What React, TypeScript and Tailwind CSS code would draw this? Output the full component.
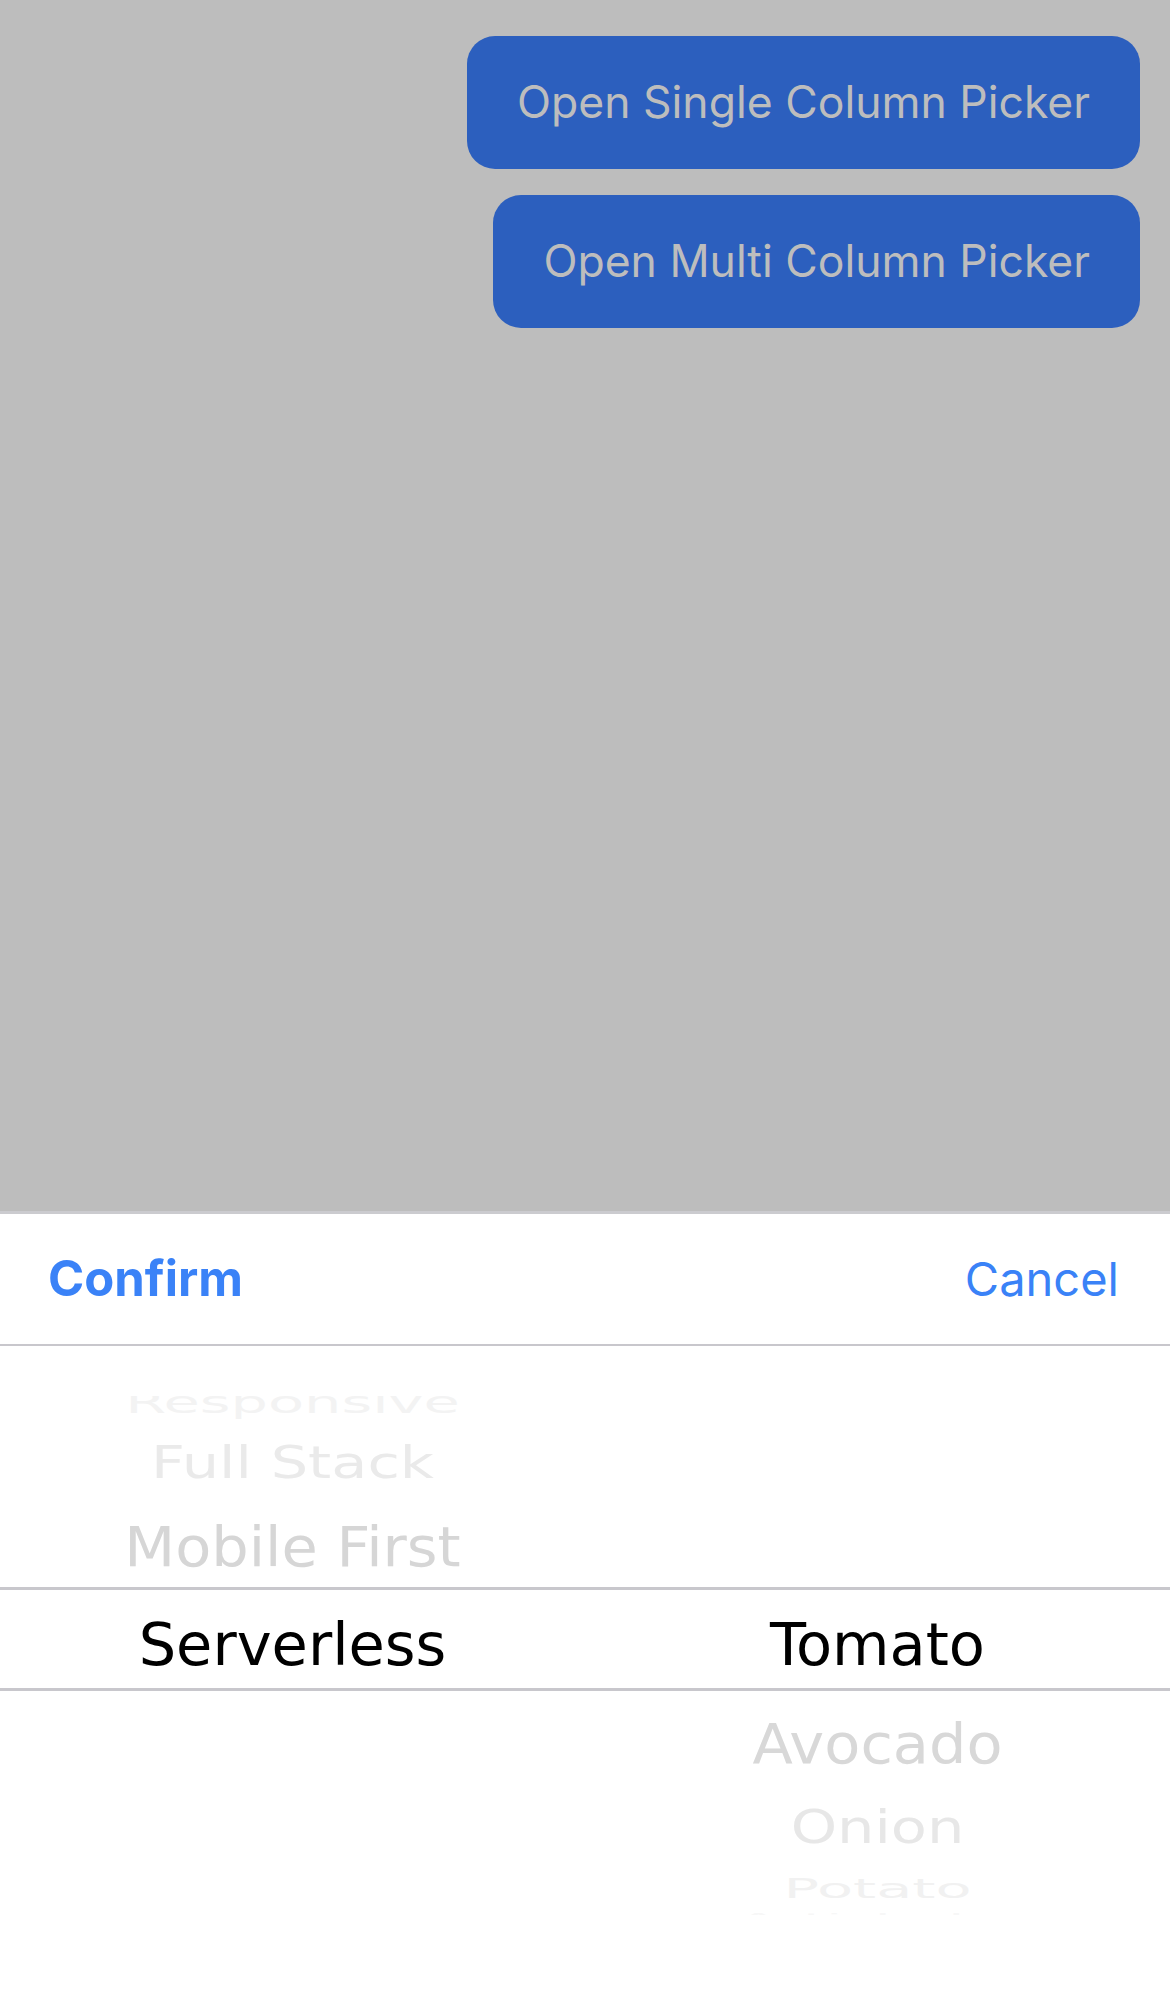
import { useState } from 'react'

type Row = { label: string; h: string; scale: string; color: string }

// rows above the selection, drawn top to bottom
const ABOVE: Row[] = [
    { label: 'Responsive', h: 'h-[30px]', scale: 'scale-y-[0.5]', color: 'text-[#f3f3f3]' },
    { label: 'Full Stack', h: 'h-[90px]', scale: 'scale-y-[0.76]', color: 'text-[#eaeaea]' },
    { label: 'Mobile First', h: 'h-[80px]', scale: 'scale-y-[0.92]', color: 'text-[#d6d6d6]' },
]

// rows below the selection
const BELOW: Row[] = [
    { label: 'Avocado', h: 'h-[104px]', scale: 'scale-y-[0.93]', color: 'text-[#d8d8d8]' },
    { label: 'Onion', h: 'h-[64px]', scale: 'scale-y-[0.78]', color: 'text-[#e7e7e7]' },
    { label: 'Potato', h: 'h-[58px]', scale: 'scale-y-[0.45]', color: 'text-[#f1f1f1]' },
    { label: 'Artichoke', h: 'h-0', scale: 'scale-y-[0.17]', color: 'text-[#f7f7f7]' },
]

const ui = "font-['Inter','Liberation_Sans',sans-serif]"
const wheel = "font-['DejaVu_Sans','Liberation_Sans',sans-serif]"

function WheelRow({ row }: { row: Row }) {
    return (
        <div className={`${row.h} shrink-0 flex items-center justify-center`}>
            <span className={`block leading-none whitespace-nowrap text-[59px] ${row.scale} ${row.color}`}>{row.label}</span>
        </div>
    )
}

export default function App() {
    const [open, setOpen] = useState(true)

    return (
        <div className={`min-h-[1992px] bg-[#bdbdbd] flex flex-col ${ui}`}>
            <div className="flex flex-col items-end gap-[26px] pt-[36px] pr-[30px]">
                <button
                    onClick={() => setOpen(true)}
                    className="h-[133px] px-[50px] rounded-[28px] bg-[#2c5fbe] text-[#bdbdbd] text-[44.5px] whitespace-nowrap"
                >
                    Open Single Column Picker
                </button>
                <button
                    onClick={() => setOpen(true)}
                    className="h-[133px] px-[50px] rounded-[28px] bg-[#2c5fbe] text-[#bdbdbd] text-[44.5px] whitespace-nowrap"
                >
                    Open Multi Column Picker
                </button>
            </div>

            {open && (
                <div className="mt-auto bg-white border-t-[3px] border-[#cbcbcf]">
                    <div className="h-[132px] flex items-center justify-between pl-[48px] pr-[51px] border-b-2 border-[#c8c7cc]">
                        <button onClick={() => setOpen(false)} className="text-[49px] font-bold text-[#3a82f7]">
                            Confirm
                        </button>
                        <button onClick={() => setOpen(false)} className="text-[47px] text-[#3a82f7]">
                            Cancel
                        </button>
                    </div>

                    <div className={`h-[646px] pt-[50px] ${wheel}`}>
                        <div className="h-[191px] overflow-hidden grid grid-cols-2">
                            <div className="h-[191px] min-h-0 flex flex-col justify-end">
                                {ABOVE.map((row) => (
                                    <WheelRow key={row.label} row={row} />
                                ))}
                            </div>
                            <div />
                        </div>

                        <div className="h-[104px] border-y-[3px] border-[#c8c7cc] pt-[10px] grid grid-cols-2 items-center text-[59px] leading-none text-black">
                            <div className="text-center">Serverless</div>
                            <div className="text-center">Tomato</div>
                        </div>

                        <div className="h-[224px] overflow-hidden grid grid-cols-2">
                            <div />
                            <div className="flex flex-col">
                                {BELOW.map((row) => (
                                    <WheelRow key={row.label} row={row} />
                                ))}
                            </div>
                        </div>
                    </div>
                </div>
            )}
        </div>
    )
}
